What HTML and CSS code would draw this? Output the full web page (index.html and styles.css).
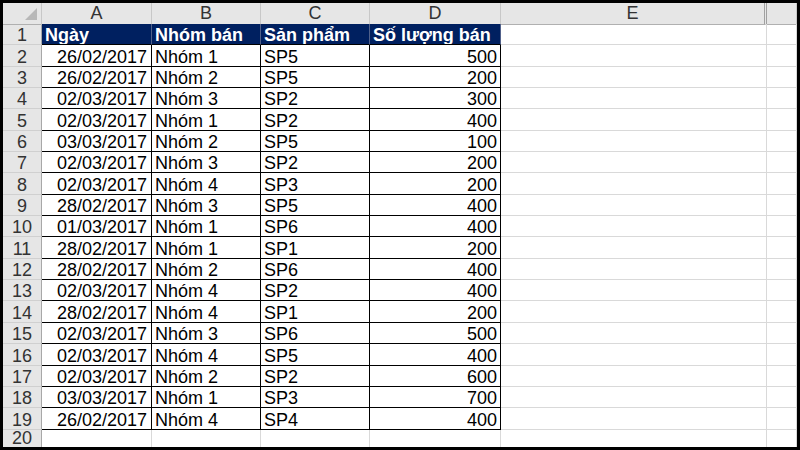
FILE: index.html
```html
<!DOCTYPE html>
<html lang="vi">
<head>
<meta charset="utf-8">
<title>Bảng tính</title>
<link rel="stylesheet" href="styles.css">
</head>
<body>
<div class="frame">
  <div class="sheet">
    <div class="row hdr">
      <div class="corner"><span class="tri"></span></div>
      <div class="ch">A</div><div class="ch">B</div><div class="ch">C</div><div class="ch">D</div><div class="ch e">E</div><div class="ch"></div>
    </div>
    <div class="row">
      <div class="rh">1</div>
      <div class="c h">Ngày</div><div class="c h">Nhóm bán</div><div class="c h">Sản phẩm</div><div class="c h">Số lượng bán</div><div class="c"></div><div class="c"></div>
    </div>
    <div class="row"><div class="rh">2</div><div class="c t a num">26/02/2017</div><div class="c t">Nhóm 1</div><div class="c t">SP5</div><div class="c t num">500</div><div class="c"></div><div class="c"></div></div>
    <div class="row"><div class="rh">3</div><div class="c t a num">26/02/2017</div><div class="c t">Nhóm 2</div><div class="c t">SP5</div><div class="c t num">200</div><div class="c"></div><div class="c"></div></div>
    <div class="row"><div class="rh">4</div><div class="c t a num">02/03/2017</div><div class="c t">Nhóm 3</div><div class="c t">SP2</div><div class="c t num">300</div><div class="c"></div><div class="c"></div></div>
    <div class="row"><div class="rh">5</div><div class="c t a num">02/03/2017</div><div class="c t">Nhóm 1</div><div class="c t">SP2</div><div class="c t num">400</div><div class="c"></div><div class="c"></div></div>
    <div class="row"><div class="rh">6</div><div class="c t a num">03/03/2017</div><div class="c t">Nhóm 2</div><div class="c t">SP5</div><div class="c t num">100</div><div class="c"></div><div class="c"></div></div>
    <div class="row"><div class="rh">7</div><div class="c t a num">02/03/2017</div><div class="c t">Nhóm 3</div><div class="c t">SP2</div><div class="c t num">200</div><div class="c"></div><div class="c"></div></div>
    <div class="row"><div class="rh">8</div><div class="c t a num">02/03/2017</div><div class="c t">Nhóm 4</div><div class="c t">SP3</div><div class="c t num">200</div><div class="c"></div><div class="c"></div></div>
    <div class="row"><div class="rh">9</div><div class="c t a num">28/02/2017</div><div class="c t">Nhóm 3</div><div class="c t">SP5</div><div class="c t num">400</div><div class="c"></div><div class="c"></div></div>
    <div class="row"><div class="rh">10</div><div class="c t a num">01/03/2017</div><div class="c t">Nhóm 1</div><div class="c t">SP6</div><div class="c t num">400</div><div class="c"></div><div class="c"></div></div>
    <div class="row"><div class="rh">11</div><div class="c t a num">28/02/2017</div><div class="c t">Nhóm 1</div><div class="c t">SP1</div><div class="c t num">200</div><div class="c"></div><div class="c"></div></div>
    <div class="row"><div class="rh">12</div><div class="c t a num">28/02/2017</div><div class="c t">Nhóm 2</div><div class="c t">SP6</div><div class="c t num">400</div><div class="c"></div><div class="c"></div></div>
    <div class="row"><div class="rh">13</div><div class="c t a num">02/03/2017</div><div class="c t">Nhóm 4</div><div class="c t">SP2</div><div class="c t num">400</div><div class="c"></div><div class="c"></div></div>
    <div class="row"><div class="rh">14</div><div class="c t a num">28/02/2017</div><div class="c t">Nhóm 4</div><div class="c t">SP1</div><div class="c t num">200</div><div class="c"></div><div class="c"></div></div>
    <div class="row"><div class="rh">15</div><div class="c t a num">02/03/2017</div><div class="c t">Nhóm 3</div><div class="c t">SP6</div><div class="c t num">500</div><div class="c"></div><div class="c"></div></div>
    <div class="row"><div class="rh">16</div><div class="c t a num">02/03/2017</div><div class="c t">Nhóm 4</div><div class="c t">SP5</div><div class="c t num">400</div><div class="c"></div><div class="c"></div></div>
    <div class="row"><div class="rh">17</div><div class="c t a num">02/03/2017</div><div class="c t">Nhóm 2</div><div class="c t">SP2</div><div class="c t num">600</div><div class="c"></div><div class="c"></div></div>
    <div class="row"><div class="rh">18</div><div class="c t a num">03/03/2017</div><div class="c t">Nhóm 1</div><div class="c t">SP3</div><div class="c t num">700</div><div class="c"></div><div class="c"></div></div>
    <div class="row"><div class="rh">19</div><div class="c t a num">26/02/2017</div><div class="c t">Nhóm 4</div><div class="c t">SP4</div><div class="c t num">400</div><div class="c"></div><div class="c"></div></div>
    <div class="row last"><div class="rh">20</div><div class="c"></div><div class="c"></div><div class="c"></div><div class="c"></div><div class="c"></div><div class="c"></div></div>
  </div>
</div>
</body>
</html>
```
FILE: styles.css
```css
html, body {
  margin: 0;
  padding: 0;
  background: #000;
  width: 800px;
  height: 450px;
  overflow: hidden;
}

.frame {
  box-sizing: border-box;
  padding: 3px;
  width: 800px;
  height: 450px;
}

.sheet {
  width: 794px;
  height: 444px;
  overflow: hidden;
  background: #fff;
  font-family: "Liberation Sans", Arial, sans-serif;
  font-size: 18px;
  color: #000;
}

.row {
  display: grid;
  grid-template-columns: 39px 110px 109px 109px 131px 266px 30px;
  height: 21.35px;
}

.row.hdr {
  height: 21px;
  background: #e6e6e6;
}

.row.last {
  height: 17.4px;
}

.row.last .rh,
.row.last .c {
  border-bottom: 0;
  line-height: 16px;
}

.row.last .rh {
  padding-bottom: 2px;
}

.corner {
  position: relative;
  box-sizing: border-box;
  border-right: 1px solid #c8c8c8;
  border-bottom: 1px solid #b0b0b0;
  background: #e6e6e6;
}

.tri {
  position: absolute;
  right: 4px;
  bottom: 4px;
  width: 0;
  height: 0;
  border-left: 12px solid transparent;
  border-bottom: 12px solid #b8b8b8;
}

.ch {
  box-sizing: border-box;
  border-right: 1px solid #c8c8c8;
  border-bottom: 1px solid #b0b0b0;
  background: #e6e6e6;
  color: #333;
  text-align: center;
  line-height: 21px;
}

.ch.e {
  border-right: 3px double #a0a0a0;
}

.rh {
  box-sizing: border-box;
  background: #e6e6e6;
  border-right: 1px solid #a8a8a8;
  border-bottom: 1px solid #d0d0d0;
  color: #333;
  text-align: center;
  display: flex;
  align-items: flex-end;
  justify-content: center;
  line-height: 18px;
}

.c {
  box-sizing: border-box;
  border-right: 1px solid #d9d9d9;
  border-bottom: 1px solid #d9d9d9;
  padding: 0 3px;
  display: flex;
  align-items: flex-end;
  line-height: 18px;
  white-space: nowrap;
  overflow: hidden;
}

.c.h {
  background: #002060;
  color: #fff;
  font-weight: bold;
  border-right: 1px solid #51618a;
  border-bottom: 1px solid #000;
}

.c.t {
  border-right: 1px solid #000;
  border-bottom: 1px solid #000;
}

.c.num {
  justify-content: flex-end;
}

.c.a {
  padding-right: 4px;
}
```
